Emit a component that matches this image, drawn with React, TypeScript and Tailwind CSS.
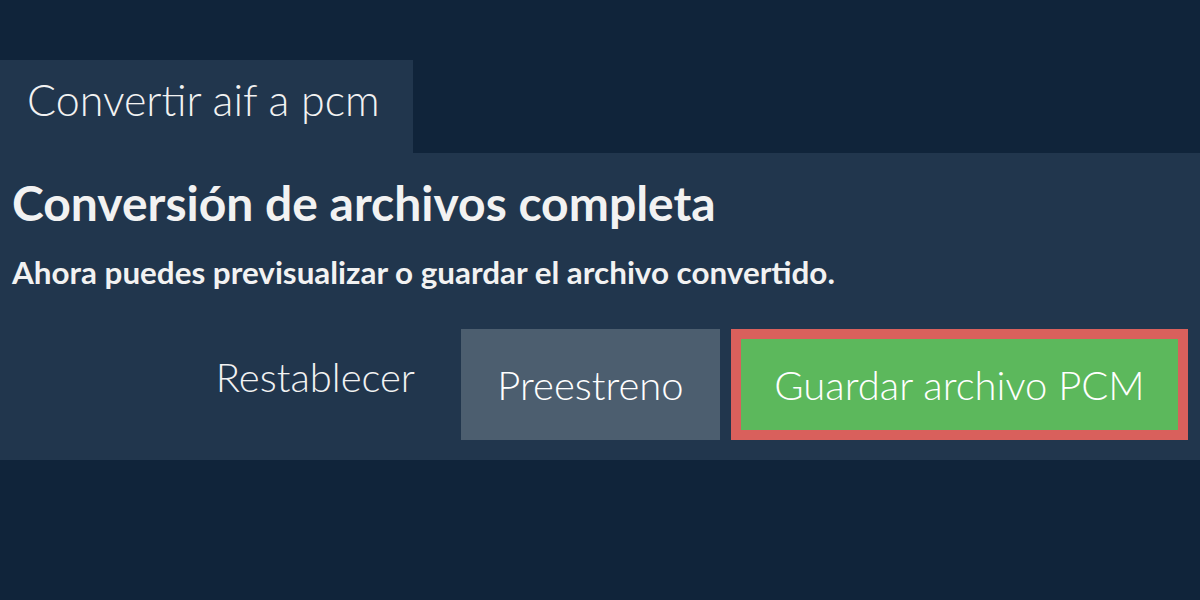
import React from "react";

export default function App() {
  return (
    <div className="w-[1200px] h-[600px] bg-[#10243a] text-[#f2f2f2] font-['Lato',sans-serif] pt-[60px]">
      <div className="flex">
        <div className="w-[413px] h-[93px] bg-[#21364d] pl-[27px] pt-[18px]">
          <span className="block text-[43px] font-light leading-none">Convertir aif a pcm</span>
        </div>
      </div>
      <div className="bg-[#21364d] h-[307px] px-[12px] pt-[26px]">
        <h1 className="text-[48px] font-bold leading-none">Conversión de archivos completa</h1>
        <p className="text-[31.4px] font-bold leading-none mt-[30px]">Ahora puedes previsualizar o guardar el archivo convertido.</p>
        <div className="flex justify-end items-start mt-[41px] gap-[11px]">
          <button className="h-[95px] pl-[10px] pr-[35px] text-[40px] font-light text-[#f2f2f2] leading-none">Restablecer</button>
          <button className="h-[111px] w-[259px] bg-[#4c5e6f] text-[40px] font-light text-white leading-none">Preestreno</button>
          <button className="h-[111px] w-[457px] bg-[#5cb85c] border-[10px] border-[#d9605c] text-[40px] font-light text-white leading-none">Guardar archivo PCM</button>
        </div>
      </div>
    </div>
  );
}
